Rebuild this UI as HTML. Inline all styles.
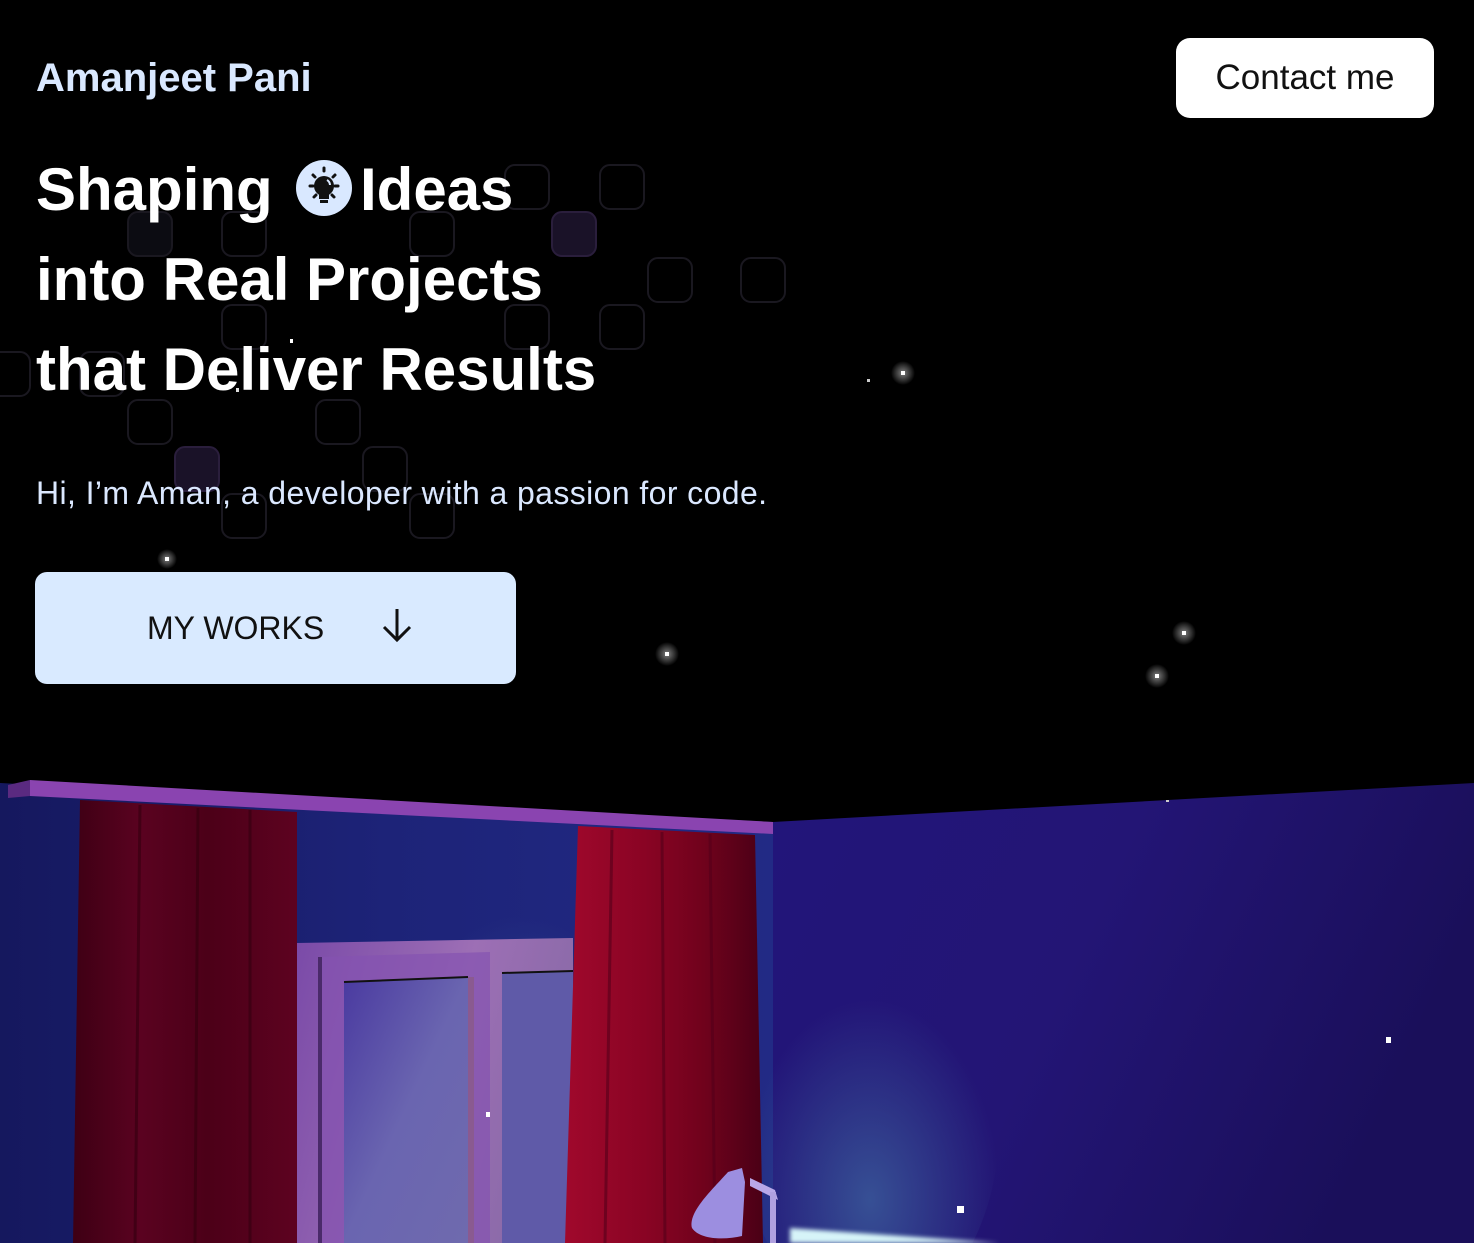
<!DOCTYPE html>
<html><head><meta charset="utf-8"><style>
html,body{margin:0;padding:0;background:#000;width:1474px;height:1243px;overflow:hidden;position:relative;font-family:"Liberation Sans",sans-serif}
.t{position:absolute;white-space:nowrap}
</style></head><body>
<svg width="1474" height="1243" style="position:absolute;left:0;top:0">
<defs>
<linearGradient id="lw" x1="0" y1="0" x2="1" y2="0"><stop offset="0" stop-color="#15185e"/><stop offset="0.5" stop-color="#1d2378"/><stop offset="1" stop-color="#222a85"/></linearGradient>
<linearGradient id="rw" x1="0" y1="0" x2="1" y2="0.3"><stop offset="0" stop-color="#22157a"/><stop offset="0.5" stop-color="#231575"/><stop offset="1" stop-color="#1a0f5a"/></linearGradient>
<radialGradient id="glow" cx="0.5" cy="0.7" r="0.5"><stop offset="0" stop-color="#3a5a9a" stop-opacity="0.85"/><stop offset="1" stop-color="#3a5a9a" stop-opacity="0"/></radialGradient>
<linearGradient id="cl" x1="0" y1="0" x2="1" y2="0"><stop offset="0" stop-color="#3e0014"/><stop offset="0.3" stop-color="#5a0220"/><stop offset="0.6" stop-color="#4c0018"/><stop offset="1" stop-color="#5d0220"/></linearGradient>
<linearGradient id="cr" x1="0" y1="0" x2="1" y2="0"><stop offset="0" stop-color="#a0082c"/><stop offset="0.4" stop-color="#8a0424"/><stop offset="0.7" stop-color="#70021c"/><stop offset="1" stop-color="#4a0016"/></linearGradient>
<linearGradient id="fr" x1="0" y1="0" x2="1" y2="0.3"><stop offset="0" stop-color="#7a4aa8"/><stop offset="0.6" stop-color="#9d6fb5"/><stop offset="1" stop-color="#8a6aa8"/></linearGradient>
<linearGradient id="pn" x1="0" y1="0" x2="1" y2="1"><stop offset="0" stop-color="#4a3aa0"/><stop offset="0.5" stop-color="#6a65b0"/><stop offset="1" stop-color="#6f6aae"/></linearGradient>
<radialGradient id="star"><stop offset="0" stop-color="#fff" stop-opacity="0.5"/><stop offset="1" stop-color="#fff" stop-opacity="0"/></radialGradient>
</defs>
<g fill="none" stroke="#1a1820" stroke-width="2">
<rect x="128" y="212" width="44" height="44" rx="10" fill="#0c0c12"/><rect x="222" y="212" width="44" height="44" rx="10"/><rect x="410" y="212" width="44" height="44" rx="10"/>
<rect x="552" y="212" width="44" height="44" rx="10" fill="#1a1228" stroke="#2a1e3c"/>
<rect x="505" y="165" width="44" height="44" rx="10"/><rect x="600" y="165" width="44" height="44" rx="10"/>
<rect x="648" y="258" width="44" height="44" rx="10"/><rect x="741" y="258" width="44" height="44" rx="10"/>
<rect x="222" y="305" width="44" height="44" rx="10"/><rect x="505" y="305" width="44" height="44" rx="10"/><rect x="600" y="305" width="44" height="44" rx="10"/>
<rect x="-10" y="352" width="40" height="44" rx="10"/><rect x="80" y="352" width="44" height="44" rx="10"/>
<rect x="128" y="400" width="44" height="44" rx="10"/><rect x="316" y="400" width="44" height="44" rx="10"/>
<rect x="175" y="447" width="44" height="44" rx="10" fill="#1a1228" stroke="#2a1e3c"/><rect x="363" y="447" width="44" height="44" rx="10"/>
<rect x="222" y="494" width="44" height="44" rx="10"/><rect x="410" y="494" width="44" height="44" rx="10"/>
</g>
<g>
<circle cx="903" cy="373" r="12" fill="url(#star)"/><rect x="901" y="371" width="4" height="4" fill="#fff"/>
<rect x="867" y="379" width="3" height="3" fill="#ccc"/>
<circle cx="167" cy="559" r="10" fill="url(#star)"/><rect x="165" y="557" width="4" height="4" fill="#fff"/>
<circle cx="667" cy="654" r="12" fill="url(#star)"/><rect x="665" y="652" width="4" height="4" fill="#fff"/>
<circle cx="1184" cy="633" r="12" fill="url(#star)"/><rect x="1182" y="631" width="4" height="4" fill="#fff"/>
<circle cx="1157" cy="676" r="12" fill="url(#star)"/><rect x="1155" y="674" width="4" height="4" fill="#fff"/>
<rect x="290" y="339" width="3" height="4" fill="#fff"/><rect x="236" y="388" width="3" height="4" fill="#ddd"/>
</g>
<polygon points="0,783 773,822 773,1243 0,1243" fill="url(#lw)"/>
<polygon points="773,822 1474,783 1474,1243 773,1243" fill="url(#rw)"/>
<ellipse cx="870" cy="1120" rx="130" ry="200" fill="url(#glow)"/>
<ellipse cx="520" cy="1000" rx="110" ry="140" fill="url(#glow)" opacity="0.6"/>
<polygon points="297,943 573,938 573,1243 297,1243" fill="url(#fr)"/>
<polygon points="318,957 490,952 490,1243 318,1243" fill="#8452b0" opacity="0.7"/>
<rect x="318" y="957" width="4" height="286" fill="#4a2a6a"/>
<polygon points="344,982 468,977 468,1243 344,1243" fill="url(#pn)"/>
<line x1="344" y1="982" x2="468" y2="977" stroke="#111" stroke-width="2"/>
<rect x="468" y="977" width="6" height="266" fill="#8a5a90"/>
<polygon points="502,973 573,971 573,1243 502,1243" fill="#5f5aa8"/>
<line x1="502" y1="973" x2="573" y2="971" stroke="#111" stroke-width="2"/>
<rect x="486" y="1112" width="4" height="5" fill="#fff"/>
<polygon points="80,800 297,812 297,1243 73,1243" fill="url(#cl)"/>
<g stroke="#33000f" stroke-width="3" opacity="0.6"><line x1="140" y1="805" x2="135" y2="1243"/><line x1="198" y1="808" x2="195" y2="1243"/><line x1="250" y1="810" x2="250" y2="1243"/></g>
<polygon points="578,826 755,835 763,1243 565,1243" fill="url(#cr)"/>
<g stroke="#55001a" stroke-width="3" opacity="0.6"><line x1="612" y1="830" x2="605" y2="1243"/><line x1="662" y1="832" x2="665" y2="1243"/><line x1="710" y1="834" x2="715" y2="1243"/></g>
<polygon points="8,785 30,780 30,796 8,798" fill="#5a2a80"/>
<polygon points="30,780 773,822 773,834 30,796" fill="#8a44b0"/>
<rect x="1166" y="800" width="3" height="2" fill="#ccc"/>
<rect x="1386" y="1037" width="5" height="6" fill="#fff"/>
<rect x="957" y="1206" width="7" height="7" fill="#fff"/>
<polygon points="790,1228 1000,1243 790,1243" fill="#e0ffff" opacity="0.95" style="filter:blur(2px)"/>
<polygon points="750,1178 775,1190 778,1200 750,1186" fill="#b8a8e8"/>
<rect x="770" y="1192" width="6" height="51" fill="#b0a0e0"/>
<path d="M728,1172 L742,1168 L745,1182 L742,1236 C725,1240 700,1240 692,1228 C688,1212 712,1190 728,1172Z" fill="#9c8ee0"/>
<g transform="translate(294,158)">
<circle cx="30" cy="30" r="28" fill="#d9e8ff"/>
<circle cx="30" cy="28" r="10" fill="#111"/><rect x="25" y="34" width="10" height="7" fill="#111"/><rect x="26" y="42" width="8" height="3" fill="#111"/>
<path d="M33,22 a6,6 0 0 1 3,5" stroke="#d9e8ff" stroke-width="2" fill="none"/>
<g stroke="#111" stroke-width="3" stroke-linecap="round"><line x1="30" y1="10" x2="30" y2="13"/><line x1="16" y1="28" x2="19" y2="28"/><line x1="41" y1="28" x2="44" y2="28"/><line x1="19" y1="17" x2="21" y2="19"/><line x1="41" y1="17" x2="39" y2="19"/><line x1="20" y1="39" x2="22" y2="37"/><line x1="40" y1="39" x2="38" y2="37"/></g>
</g>
</svg>
<div class="t" style="left:36px;top:55px;font-size:40px;font-weight:bold;color:#d9e8ff;line-height:46px">Amanjeet Pani</div>
<div style="position:absolute;left:1176px;top:38px;width:258px;height:80px;background:#fff;border-radius:14px"></div>
<div class="t" style="left:1176px;top:38px;width:258px;line-height:80px;text-align:center;font-size:35px;color:#111">Contact me</div>
<div class="t" style="left:36px;top:157px;font-size:60px;font-weight:bold;color:#fff;line-height:66px">Shaping</div>
<div class="t" style="left:360px;top:157px;font-size:60px;font-weight:bold;color:#fff;line-height:66px">Ideas</div>
<div class="t" style="left:36px;top:247px;font-size:60px;font-weight:bold;color:#fff;line-height:66px">into Real Projects</div>
<div class="t" style="left:36px;top:337px;font-size:60px;font-weight:bold;color:#fff;line-height:66px">that Deliver Results</div>
<div class="t" style="left:36px;top:474px;font-size:32px;line-height:38px;color:#dbe8ff;letter-spacing:0.4px">Hi, I’m Aman, a developer with a passion for code.</div>
<div style="position:absolute;left:35px;top:572px;width:481px;height:112px;background:#d9eaff;border-radius:12px"></div>
<div class="t" style="left:147px;top:608px;font-size:32px;line-height:40px;color:#111">MY WORKS</div>
<svg width="36" height="40" style="position:absolute;left:379px;top:606px"><path d="M18,3 V34 M5,21 L18,34 L31,21" stroke="#111" stroke-width="3" fill="none"/></svg>
</body></html>
